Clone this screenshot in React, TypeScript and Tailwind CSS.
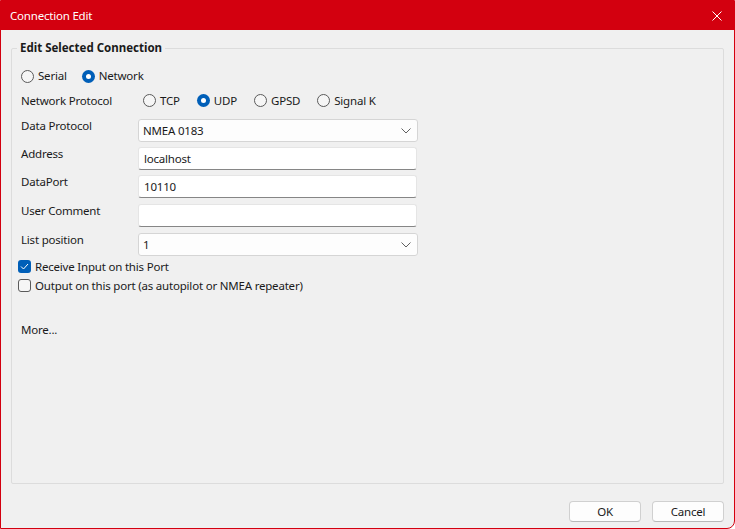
import React from 'react'

const font = { fontFamily: '"Noto Sans", "Open Sans", sans-serif' }

function Radio({ label, checked }: { label: string; checked?: boolean }) {
  return (
    <label className="flex items-center gap-[4px] h-[16px]">
      {checked ? (
        <span className="w-[13px] h-[13px] rounded-full bg-[#005fb8] flex items-center justify-center">
          <span className="w-[5px] h-[5px] rounded-full bg-white" />
        </span>
      ) : (
        <span className="w-[13px] h-[13px] rounded-full border border-[#5a5a5a] bg-[#f6f6f6]" />
      )}
      <span>{label}</span>
    </label>
  )
}

function Chevron() {
  return (
    <svg width="10" height="6" viewBox="0 0 10 6" className="text-[#606060]">
      <path d="M0.5 0.5 L5 5 L9.5 0.5" fill="none" stroke="currentColor" strokeWidth="1" />
    </svg>
  )
}

function Combo({ value }: { value: string }) {
  return (
    <div className="w-[280px] h-[23px] bg-[#fdfdfd] border border-[#d5d5d5] rounded-[3px] flex items-center justify-between pl-[4px] pr-[6px]">
      <span>{value}</span>
      <Chevron />
    </div>
  )
}

function TextBox({ value }: { value?: string }) {
  return (
    <div className="w-[279px] h-[23px] bg-white border border-[#e5e5e5] border-b-[#868686] rounded-[3px] flex items-center pl-[5px]">
      <span>{value}</span>
    </div>
  )
}

function Field({ label, children, className }: { label: string; children: React.ReactNode; className?: string }) {
  return (
    <div className={'flex items-start ' + (className ?? '')}>
      <span className="w-[117px] leading-[16px] mt-[-1px]">{label}</span>
      {children}
    </div>
  )
}

function Check({ label, checked }: { label: string; checked?: boolean }) {
  return (
    <label className="flex items-center gap-[4px] -ml-[3px] h-[16px]">
      {checked ? (
        <span className="w-[13px] h-[13px] rounded-[3px] bg-[#005fb8] flex items-center justify-center">
          <svg width="9" height="7" viewBox="0 0 9 7">
            <path d="M1 3.5 L3.5 6 L8 1" fill="none" stroke="white" strokeWidth="1" />
          </svg>
        </span>
      ) : (
        <span className="w-[13px] h-[13px] rounded-[3px] border border-[#5a5a5a] bg-[#f6f6f6]" />
      )}
      <span>{label}</span>
    </label>
  )
}

function Button({ label }: { label: string }) {
  return (
    <button className="w-[72px] h-[21px] bg-[#fdfdfd] border border-[#d0d0d0] border-b-[#b8b8b8] rounded-[4px] text-[11.5px] tracking-[-0.2px] text-[#1a1a1a] flex items-center justify-center">
      {label}
    </button>
  )
}

export default function App() {
  return (
    <div
      className="w-[735px] h-[529px] bg-[#f0f0f0] border border-[#d3000f] rounded-br-[8px] flex flex-col text-[11.5px] tracking-[-0.2px] text-[#1a1a1a] overflow-hidden"
      style={font}
    >
      <div className="h-[29px] bg-[#d3000f] flex items-center justify-between pl-[9px] pr-[12px] text-white">
        <span>Connection Edit</span>
        <svg width="10" height="10" viewBox="0 0 10 10">
          <path d="M0.5 0.5 L9.5 9.5 M9.5 0.5 L0.5 9.5" stroke="white" strokeWidth="1" />
        </svg>
      </div>

      <div className="flex-1 flex flex-col px-[10px] pt-[10px]">
        <fieldset className="h-[444px] border border-[#dcdcdc] rounded-[2px] px-[9px]">
          <legend className="-ml-[4px] px-[3px] font-bold leading-[16px] tracking-normal">Edit Selected Connection</legend>

          <div className="flex gap-[15px] mt-[12px]">
            <Radio label="Serial" />
            <Radio label="Network" checked />
          </div>

          <div className="flex items-center mt-[8px]">
            <span className="w-[122px]">Network Protocol</span>
            <div className="flex gap-[17px]">
              <Radio label="TCP" />
              <Radio label="UDP" checked />
              <Radio label="GPSD" />
              <Radio label="Signal K" />
            </div>
          </div>

          <Field label="Data Protocol" className="mt-[10px]">
            <Combo value="NMEA 0183" />
          </Field>
          <Field label="Address" className="mt-[5px]">
            <TextBox value="localhost" />
          </Field>
          <Field label="DataPort" className="mt-[5px]">
            <TextBox value="10110" />
          </Field>
          <Field label="User Comment" className="mt-[6px]">
            <TextBox />
          </Field>
          <Field label="List position" className="mt-[6px]">
            <Combo value="1" />
          </Field>

          <div className="flex flex-col gap-[3px] mt-[2px]">
            <Check label="Receive Input on this Port" checked />
            <Check label="Output on this port (as autopilot or NMEA repeater)" />
          </div>

          <div className="mt-[28px]">More...</div>
        </fieldset>

        <div className="flex justify-end gap-[11px] mt-[17px]">
          <Button label="OK" />
          <Button label="Cancel" />
        </div>
      </div>
    </div>
  )
}
